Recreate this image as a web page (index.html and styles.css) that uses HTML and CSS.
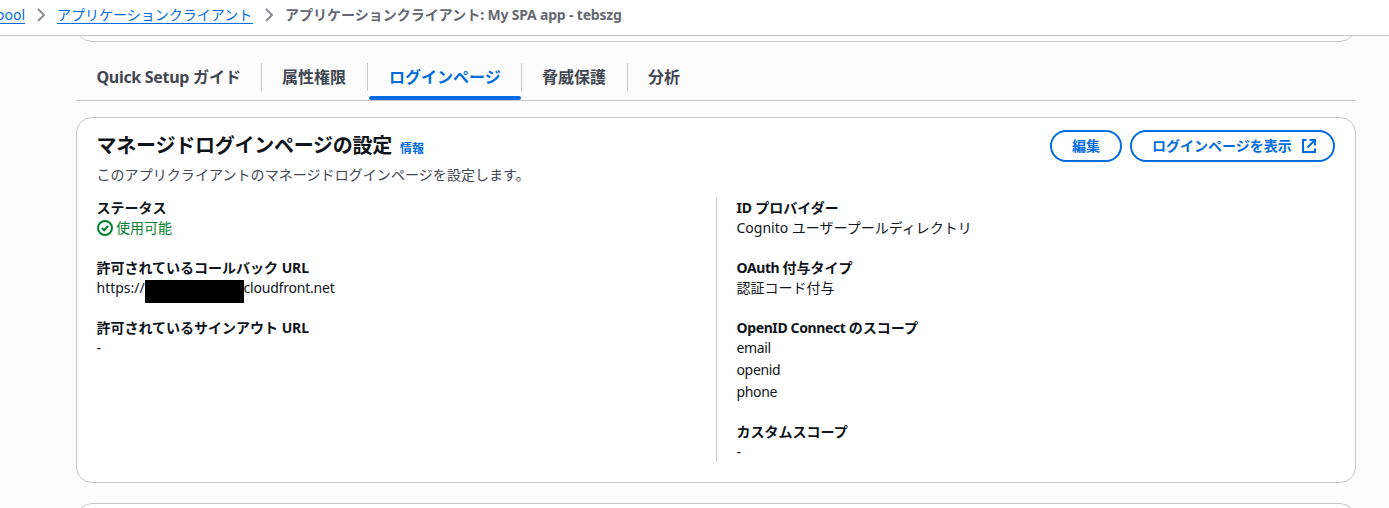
FILE: index.html
```html
<!DOCTYPE html>
<html lang="ja">
<head>
<meta charset="utf-8">
<title>アプリケーションクライアント</title>
<link rel="stylesheet" href="styles.css">
</head>
<body>
<header class="topbar">
  <nav class="breadcrumbs">
    <a class="crumb crumb-pool" href="#">pool</a>
    <svg class="chevron" viewBox="0 0 16 16"><path d="M5 2l6 6-6 6"/></svg>
    <a class="crumb crumb-clients" href="#">アプリケーションクライアント</a>
    <svg class="chevron" viewBox="0 0 16 16"><path d="M5 2l6 6-6 6"/></svg>
    <span class="current">アプリケーションクライアント<span class="lat-current">: My SPA app - tebszg</span></span>
  </nav>
</header>
<main class="content">
  <div class="previous"><div class="previous-card"></div></div>
  <div class="tabs">
    <div class="tab tab-quick"><span class="lat-tab">Quick Setup </span>ガイド</div>
    <div class="tab tab-attributes">属性権限</div>
    <div class="tab active">ログインページ</div>
    <div class="tab tab-threat">脅威保護</div>
    <div class="tab">分析</div>
  </div>
  <section class="card">
    <div class="card-head">
      <div>
        <div class="title-row"><h2>マネージドログインページの設定</h2><a class="info" href="#">情報</a></div>
        <p class="description">このアプリクライアントのマネージドログインページを設定します。</p>
      </div>
      <div class="actions">
        <button class="button">編集</button>
        <button class="button button-external">ログインページを表示
          <svg class="external" viewBox="0 0 16 16"><path d="M5.500 2H2v12h12v-3.500M8.500 2H14v5.500M14 2L6.500 9.500"/></svg>
        </button>
      </div>
    </div>
    <div class="columns">
      <dl class="column">
        <div class="field"><dt>ステータス</dt><dd class="status"><svg class="check" viewBox="0 0 16 16"><circle cx="8" cy="8" r="7"/><path d="M4.800 8l2.300 2.200 4-4.400"/></svg>使用可能</dd></div>
        <div class="field"><dt>許可されているコールバック<span class="lat-url"> URL</span></dt><dd class="url"><span class="scheme">https://</span><span class="redacted"></span><span class="domain">cloudfront.net</span></dd></div>
        <div class="field"><dt>許可されているサインアウト<span class="lat-url"> URL</span></dt><dd>-</dd></div>
      </dl>
      <dl class="column column-right">
        <div class="field"><dt><span class="lat-id">ID </span>プロバイダー</dt><dd><span class="lat-cognito">Cognito </span>ユーザープールディレクトリ</dd></div>
        <div class="field"><dt><span class="lat-oauth">OAuth </span>付与タイプ</dt><dd>認証コード付与</dd></div>
        <div class="field"><dt><span class="lat-openid">OpenID Connect </span>のスコープ</dt><dd class="scopes"><span>email</span><span>openid</span><span>phone</span></dd></div>
        <div class="field"><dt>カスタムスコープ</dt><dd>-</dd></div>
      </dl>
    </div>
  </section>
  <div class="next"><section class="next-card"></section></div>
</main>
</body>
</html>
```
FILE: styles.css
```css
* { box-sizing: border-box; }
body {
  margin: 0;
  height: 508px;
  overflow: hidden;
  background: #fcfcfd;
  color: #0f141a;
  font: 14px/20px "Noto Sans", "Noto Sans CJK JP", sans-serif;
}
a { color: #006ce0; }
.topbar {
  height: 36px;
  background: #fff;
  border-bottom: 1px solid #c6c6cd;
  overflow: hidden;
}
.breadcrumbs { display: flex; align-items: center; height: 30px; white-space: nowrap; }
.crumb {
  text-decoration: none;
  border-bottom: 1px solid #006ce0;
  line-height: 17px;
}
.crumb-pool { width: 25px; display: flex; justify-content: flex-end; }
.crumb-clients { width: 196px; }
.chevron { width: 16px; height: 16px; margin: 0 8px; flex: none; }
.chevron path { fill: none; stroke: #8c8c94; stroke-width: 2; }
.current { color: #656871; font-weight: 700; }
.lat-current { letter-spacing: -.18px; }
.content { width: 1280px; margin-left: 76px; }
.previous { height: 6px; overflow: hidden; display: flex; align-items: flex-end; }
.previous-card {
  width: 100%;
  height: 40px;
  flex: none;
  background: #fff;
  border: 1px solid #c6c6cd;
  border-radius: 16px;
}
.tabs {
  display: flex;
  height: 59px;
  padding-top: 21px;
  border-bottom: 1px solid #c6c6cd;
}
.tab {
  height: 28px;
  padding: 0 20px;
  border-right: 1px solid #c6c6cd;
  color: #424650;
  font-size: 16px;
  font-weight: 700;
  line-height: 28px;
  white-space: pre;
}
.tab:last-child { border-right: 0; }
.tab-quick { width: 186px; padding-left: 20.500px; }
.tab-attributes { width: 106px; }
.tab-threat { width: 106px; }
.lat-tab { letter-spacing: -.31px; }
.tab.active { color: #006ce0; width: 154px; padding-left: 21px; }
.tab.active::after {
  content: "";
  display: block;
  width: 152px;
  height: 4px;
  margin: 5px 0 0 -20px;
  border-radius: 2px;
  background: #006ce0;
}
.card {
  height: 366px;
  margin-top: 16px;
  padding: 12px 20px 20px 19.500px;
  background: #fff;
  border: 1px solid #c6c6cd;
  border-radius: 16px;
}
.card-head { display: flex; justify-content: space-between; height: 68px; }
.title-row { display: flex; align-items: baseline; gap: 8px; height: 35px; padding-top: 1px; }
h2 {
  margin: 0;
  font-size: 20px;
  line-height: 30px;
  letter-spacing: -.24px;
}
.info { font-size: 12px; font-weight: 700; text-decoration: none; }
.description { margin: 0; color: #424650; letter-spacing: .06px; }
.actions { display: flex; gap: 8px; }
.button {
  display: flex;
  align-items: center;
  gap: 9px;
  height: 32px;
  padding: 0 20px;
  border: 2px solid #006ce0;
  border-radius: 20px;
  background: #fff;
  color: #006ce0;
  font: 700 14px/20px "Noto Sans", "Noto Sans CJK JP", sans-serif;
}
.button-external { width: 205px; padding-right: 14px; justify-content: flex-start; white-space: nowrap; }
.external { width: 16px; height: 16px; flex: none; fill: none; stroke: #006ce0; stroke-width: 2; }
.columns { display: flex; height: 264px; }
.column { width: 619.500px; flex: none; margin: 0; display: flex; flex-direction: column; gap: 20px; }
.column-right { border-left: 1px solid #c6c6cd; padding-left: 19.500px; }
dt { font-weight: 700; white-space: pre; }
dd { margin: 0; white-space: pre; }
.status { display: flex; align-items: center; gap: 3.500px; color: #00802f; }
.check { width: 16px; height: 16px; fill: none; stroke: #00802f; stroke-width: 2; }
.url { display: flex; height: 20px; }
.scheme { width: 48.500px; }
.redacted { width: 99px; height: 23px; margin-top: 2px; background: #000; position: relative; }
.domain { margin-left: -.5px; letter-spacing: -.2px; }
.lat-url { letter-spacing: -.1px; }
.lat-id { letter-spacing: -.2px; }
.lat-oauth { letter-spacing: -.4px; }
.lat-openid { letter-spacing: -.38px; }
.scopes { display: flex; flex-direction: column; gap: 2px; letter-spacing: -.35px; }
.next { height: 5px; margin-top: 20px; overflow: hidden; }
.next-card {
  height: 40px;
  background: #fff;
  border: 1px solid #c6c6cd;
  border-radius: 16px;
}
```
